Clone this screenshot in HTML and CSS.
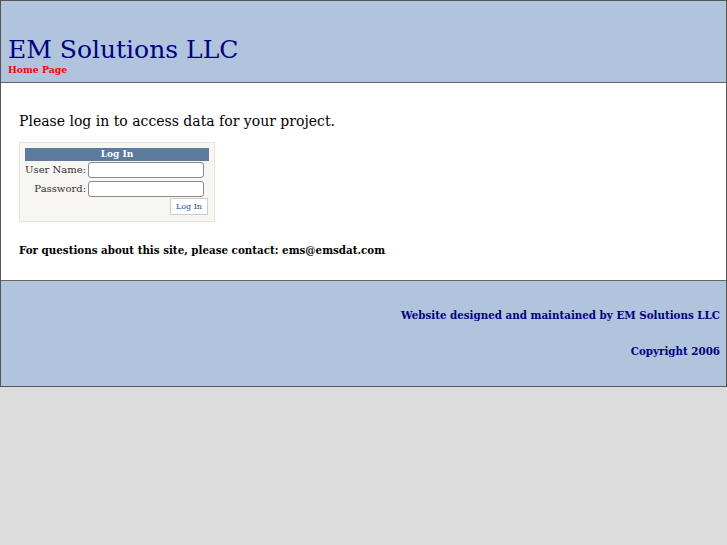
FILE: index.html
```html
<!DOCTYPE html>
<html lang="en">

<head>
  <meta charset="UTF-8" />
  <title>EM Solutions LLC</title>
  <link rel="stylesheet" href="styles.css">
</head>

<body>
  <div class="pagina">
    <div class="cabecalho">
      <h1 class="titulo">EM Solutions LLC</h1>
      <a href="#" class="home">Home Page</a>
    </div>

    <div class="conteudo">
      <p class="aviso">Please log in to access data for your project.</p>

      <form class="login">
        <div class="login-titulo">Log In</div>
        <div class="linha">
          <label for="usuario">User Name:</label>
          <input type="text" id="usuario" name="usuario" />
        </div>
        <div class="linha">
          <label for="senha">Password:</label>
          <input type="password" id="senha" name="senha" />
        </div>
        <div class="acoes">
          <button type="submit" class="btn">Log In</button>
        </div>
      </form>

      <p class="contato">For questions about this site, please contact: ems@emsdat.com</p>
    </div>

    <div class="rodape">
      <p>Website designed and maintained by EM Solutions LLC</p>
      <p>Copyright 2006</p>
    </div>
  </div>
</body>

</html>
```

FILE: styles.css
```css
body {
  margin: 0;
  font-family: "DejaVu Serif", serif;
  background-color: #dcdcdc;
}

.pagina {
  border: 1px solid #555555;
  background-color: #ffffff;
}

/* Cabecalho azul */
.cabecalho {
  background-color: #b0c4de;
  border-bottom: 1px solid #666666;
  padding: 35px 7px 6px 7px;
}

.titulo {
  font-size: 25px;
  font-weight: normal;
  color: #000080;
  margin: 0;
  line-height: 28px;
}

.home {
  display: block;
  color: #ff0000;
  font-size: 9.3px;
  font-weight: bold;
  text-decoration: none;
  line-height: 12px;
}

.conteudo {
  padding: 27px 18px 23px 18px;
}

.aviso {
  font-size: 14px;
  margin: 0 0 10px 0;
  line-height: 22px;
}

/* Caixa de login */
.login {
  width: 184px;
  background-color: #f7f6f3;
  border: 1px solid #e6e2d8;
  padding: 5px 5px 6px 5px;
  margin-bottom: 21px;
  font-size: 10px;
}

.login-titulo {
  background-color: #5d7b9d;
  color: #ffffff;
  font-weight: bold;
  font-size: 9px;
  text-align: center;
  line-height: 13px;
  margin-bottom: 1px;
}

.linha {
  display: flex;
  align-items: center;
  gap: 2px;
}

.linha + .linha {
  margin-top: 3px;
}

.linha label {
  width: 61px;
  text-align: right;
  white-space: nowrap;
  color: #333333;
  line-height: 12px;
}

.linha input {
  width: 116px;
  height: 16px;
  box-sizing: border-box;
  border: 1px solid #8a8a8a;
  border-radius: 3px;
  padding: 0 3px;
  background-color: #ffffff;
}

.acoes {
  display: flex;
  justify-content: flex-end;
  margin-top: 1px;
  padding-right: 1px;
}

.btn {
  font-family: "DejaVu Serif", serif;
  font-size: 8px;
  color: #284e98;
  background-color: #ffffff;
  border: 1px solid #cccccc;
  height: 17px;
  padding: 0 5px;
}

.contato {
  font-size: 10.3px;
  font-weight: bold;
  margin: 0;
  line-height: 14px;
}

/* Rodape */
.rodape {
  background-color: #b0c4de;
  border-top: 1px solid #666666;
  padding: 27px 6px 28px 6px;
  text-align: right;
}

.rodape p {
  color: #000080;
  font-size: 10.3px;
  font-weight: bold;
  margin: 0 0 22px 0;
  line-height: 14px;
}

.rodape p:last-child {
  margin-bottom: 0;
}
```
